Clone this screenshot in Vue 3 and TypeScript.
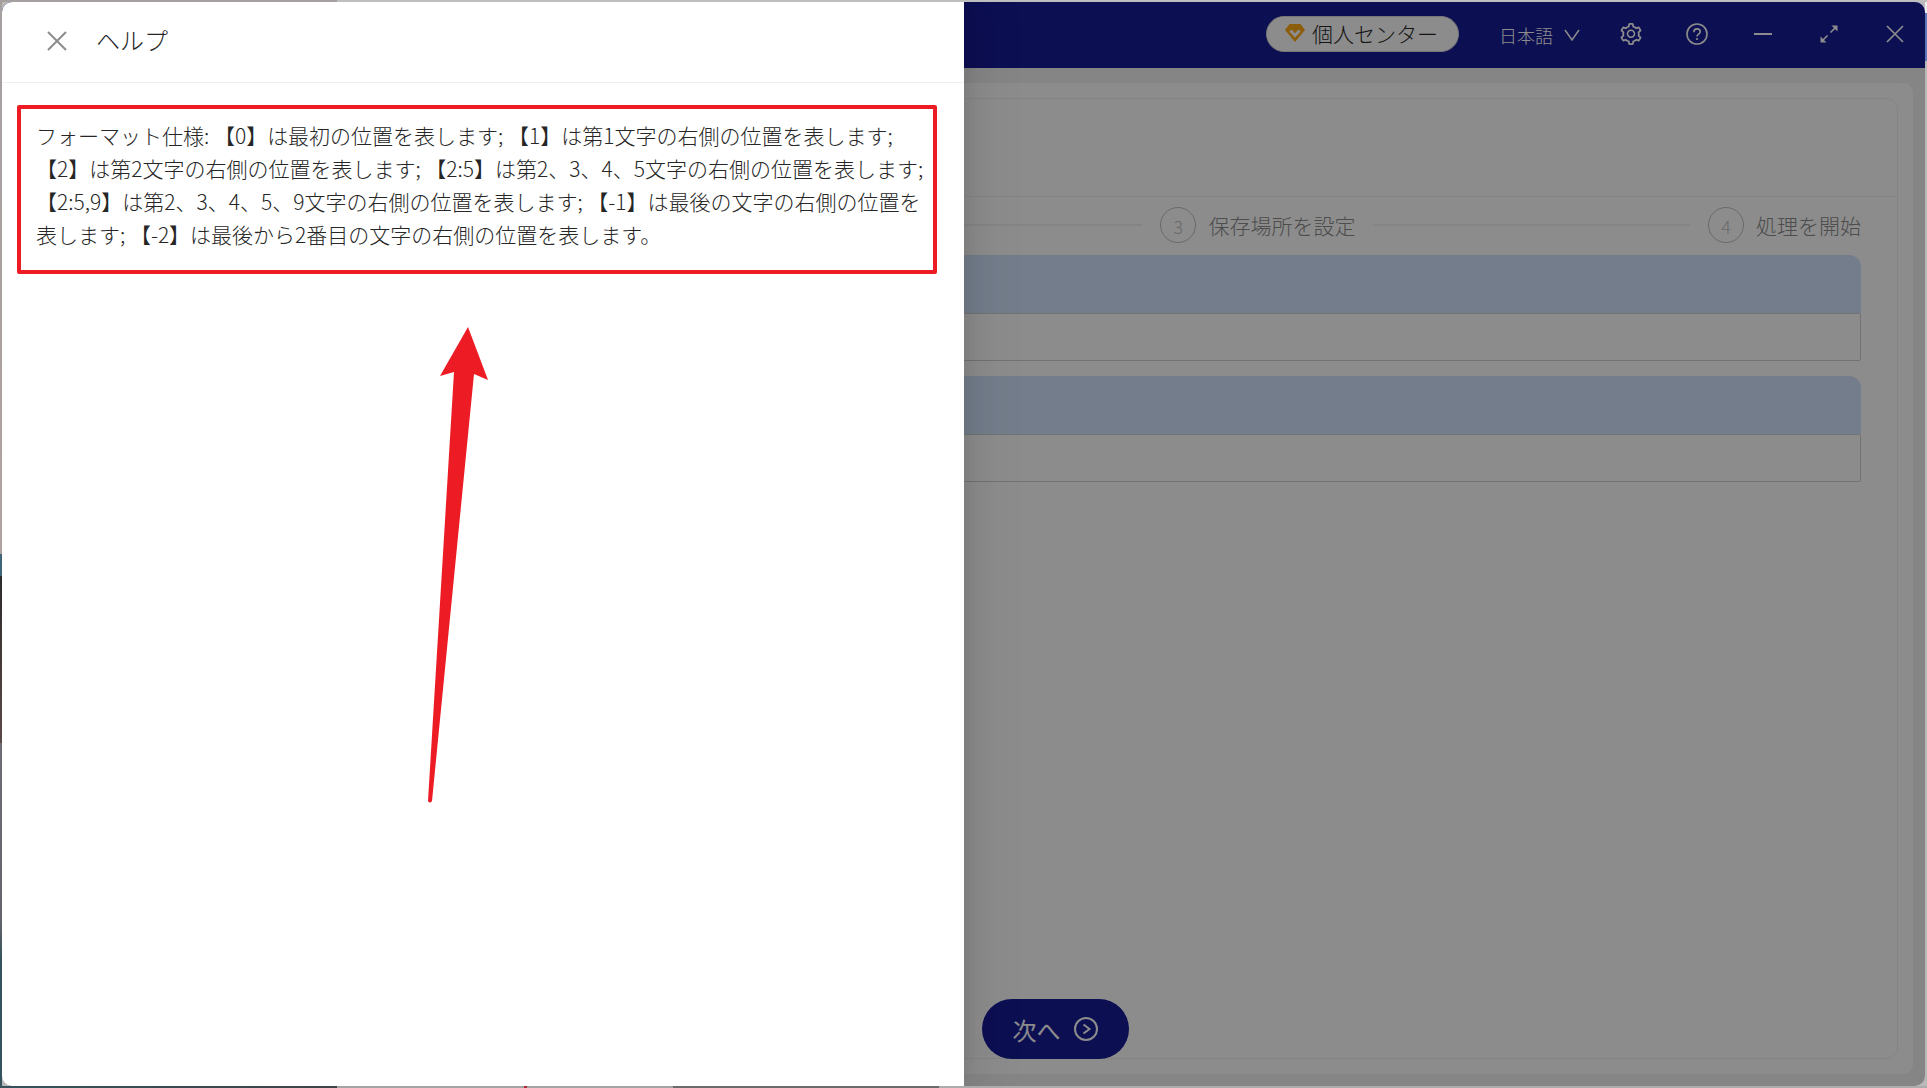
<script setup lang="ts">
interface Step {
  id: number
  title: string
}

const steps: Step[] = [
  { id: 3, title: '保存場所を設定' },
  { id: 4, title: '処理を開始' },
]

const panels: number[] = [1, 2]

const helpLines: string[] = [
  'フォーマット仕様: 【0】は最初の位置を表します; 【1】は第1文字の右側の位置を表します;',
  '【2】は第2文字の右側の位置を表します; 【2:5】は第2、3、4、5文字の右側の位置を表します;',
  '【2:5,9】は第2、3、4、5、9文字の右側の位置を表します; 【-1】は最後の文字の右側の位置を',
  '表します; 【-2】は最後から2番目の文字の右側の位置を表します。',
]
</script>

<template>
  <div class="desktop">
    <div class="window">
      <header class="titlebar">
        <button class="account" type="button">
          <svg width="20" height="20" viewBox="0 0 20 20" aria-hidden="true">
            <path d="M4.500 1h11L20 7 10 19 0 7z" fill="#ffa914" />
            <path d="M5.500 7.500L10 12.500l4.500-5" fill="none" stroke="#fff" stroke-width="3" />
          </svg>
          <span>個人センター</span>
        </button>
        <button class="language" type="button">
          <span>日本語</span>
          <svg width="16" height="16" viewBox="0 0 16 16" aria-hidden="true">
            <path d="M1 3l7 10 7-10" fill="none" stroke="#fff" stroke-width="1.500" />
          </svg>
        </button>
        <nav class="tools">
          <button type="button" aria-label="設定">
            <svg width="22" height="22" viewBox="64 64 896 896" fill="#fff" aria-hidden="true">
              <path d="M924.8 625.7l-65.5-56c3.1-19 4.7-38.4 4.7-57.8s-1.6-38.8-4.7-57.8l65.5-56a32.03 32.03 0 009.3-35.2l-.9-2.6a443.74 443.74 0 00-79.7-137.9l-1.8-2.1a32.12 32.12 0 00-35.1-9.5l-81.3 28.900c-30-24.600-63.500-44-99.700-57.600l-15.700-85a32.050 32.050 0 00-25.800-25.700l-2.700-.5c-52.100-9.400-106.900-9.400-159 0l-2.700.5a32.050 32.050 0 00-25.800 25.700l-15.800 85.400a351.860 351.860 0 00-99 57.400l-81.900-29.100a32 32 0 00-35.100 9.500l-1.800 2.100a446.020 446.020 0 00-79.700 137.900l-.9 2.600c-4.500 12.500-.8 26.500 9.300 35.200l66.300 56.600c-3.100 18.800-4.600 38-4.600 57.100 0 19.200 1.500 38.400 4.600 57.100L99 625.500a32.030 32.030 0 00-9.300 35.200l.9 2.600c18.100 50.400 44.900 96.900 79.700 137.900l1.800 2.100a32.120 32.120 0 0035.100 9.500l81.900-29.100c29.800 24.500 63.100 43.900 99 57.400l15.800 85.400a32.050 32.050 0 0025.800 25.700l2.700.5a449.400 449.400 0 00159 0l2.700-.5a32.050 32.050 0 0025.800-25.700l15.700-85a350 350 0 0099.700-57.600l81.300 28.900a32 32 0 0035.100-9.500l1.800-2.100c34.800-41.100 61.600-87.500 79.700-137.900l.9-2.600c4.500-12.300.8-26.300-9.300-35zM788.300 465.900c2.500 15.100 3.800 30.600 3.800 46.100s-1.300 31-3.800 46.100l-6.600 40.100 74.700 63.900a370.030 370.030 0 01-42.600 73.600L721 702.800l-31.400 25.800c-23.900 19.600-50.500 35-79.300 45.800l-38.100 14.300-17.900 97a377.500 377.500 0 01-85 0l-17.900-97.200-37.800-14.500c-28.500-10.800-55-26.200-78.700-45.700l-31.400-25.900-93.400 33.200c-17-22.900-31.200-47.600-42.600-73.600l75.500-64.500-6.500-40c-2.400-14.900-3.700-30.300-3.700-45.500 0-15.300 1.200-30.600 3.700-45.500l6.500-40-75.500-64.500c11.300-26.100 25.600-50.700 42.600-73.600l93.400 33.200 31.400-25.900c23.700-19.500 50.200-34.900 78.700-45.700l37.900-14.300 17.900-97.200c28.100-3.200 56.800-3.200 85 0l17.900 97 38.100 14.300c28.700 10.800 55.400 26.200 79.300 45.800l31.400 25.800 92.800-32.900c17 22.900 31.200 47.600 42.600 73.600L781.800 426l6.500 39.900zM512 326c-97.200 0-176 78.800-176 176s78.800 176 176 176 176-78.800 176-176-78.800-176-176-176zm79.200 255.200A111.600 111.600 0 01512 614c-29.900 0-58-11.700-79.200-32.800A111.600 111.600 0 01400 502c0-29.900 11.700-58 32.800-79.200C454 401.600 482.100 390 512 390c29.900 0 58 11.600 79.200 32.800A111.600 111.600 0 01624 502c0 29.900-11.700 58-32.800 79.200z" />
            </svg>
          </button>
          <button type="button" aria-label="ヘルプ">
            <svg width="22" height="22" viewBox="0 0 22 22" fill="none" stroke="#fff" stroke-width="1.600" aria-hidden="true">
              <circle cx="11" cy="11" r="10" />
              <path d="M7.800 9.200c0-2 1.400-3.300 3.200-3.300s3.200 1.200 3.200 2.900c0 2.200-3.200 2.300-3.200 4.700" />
              <path d="M11 15v2" />
            </svg>
          </button>
          <button type="button" aria-label="最小化">
            <svg width="22" height="22" viewBox="0 0 22 22" fill="none" stroke="#fff" stroke-width="2" aria-hidden="true">
              <path d="M2 11h18" />
            </svg>
          </button>
          <button type="button" aria-label="最大化">
            <svg width="22" height="22" viewBox="0 0 22 22" aria-hidden="true">
              <path d="M12.500 9.500l6-6M9.500 12.500l-6 6" fill="none" stroke="#fff" stroke-width="1.600" />
              <path d="M13.500 2.500h6v6zM8.500 19.500h-6v-6z" fill="#fff" />
            </svg>
          </button>
          <button type="button" aria-label="閉じる">
            <svg width="22" height="22" viewBox="0 0 22 22" fill="none" stroke="#fff" stroke-width="1.700" aria-hidden="true">
              <path d="M3 3l16 16M19 3L3 19" />
            </svg>
          </button>
        </nav>
      </header>

      <main class="content">
        <div class="card">
          <section class="panel">
            <div class="panel-head"></div>
            <div class="workspace">
              <ol class="steps">
                <li v-for="step in steps" :key="step.id" class="step">
                  <span class="rail" :class="{ lead: step.id === 3 }"></span>
                  <span class="badge">{{ step.id }}</span>
                  <span class="step-title">{{ step.title }}</span>
                </li>
              </ol>
              <div v-for="panel in panels" :key="panel" class="group">
                <div class="group-head"></div>
                <div class="group-body"></div>
              </div>
            </div>
            <footer class="actions">
              <button class="next" type="button">
                <span>次へ</span>
                <svg width="24" height="24" viewBox="0 0 24 24" fill="none" stroke="#fff" stroke-width="2" aria-hidden="true">
                  <circle cx="12" cy="12" r="11" />
                  <path d="M9.500 7.500l6 4.500-6 4.500" />
                </svg>
              </button>
            </footer>
          </section>
        </div>
      </main>

      <div class="mask">
        <aside class="drawer" role="dialog" aria-labelledby="drawer-title">
          <div class="drawer-head">
            <button class="close" type="button" aria-label="閉じる">
              <svg width="20" height="20" viewBox="0 0 20 20" fill="none" stroke="#8c8c8c" stroke-width="2" aria-hidden="true">
                <path d="M1 1l18 18M19 1L1 19" />
              </svg>
            </button>
            <h1 id="drawer-title">ヘルプ</h1>
          </div>
          <p class="note">
            <span v-for="line in helpLines" :key="line">{{ line }}</span>
          </p>
          <svg class="arrow" width="62" height="478" viewBox="0 0 62 478" aria-hidden="true">
            <path d="M41 0L61 53 47 47 5 474Q3 477 1 474L27 45 13 49z" fill="#ed1c24" />
          </svg>
        </aside>
      </div>
    </div>
  </div>
</template>

<style>
body {
  margin: 0;
}
</style>

<style scoped>
* {
  box-sizing: border-box;
}

.desktop {
  display: flex;
  min-height: 100vh;
  padding: 2px;
  font-family: 'Noto Sans CJK JP', sans-serif;
  font-weight: 300;
  background:
    linear-gradient(90deg, #a5a0a0 337px, #bebebe 337px) top / 100% 2px no-repeat,
    linear-gradient(90deg, #35535d, #3f4446 337px, #a3a3a3 337px, #a3a3a3 524px, #b0303a 524px, #b0303a 527px, #a3a3a3 527px, #a3a3a3 673px, #6b6b6b 673px, #6b6b6b 939px, #acacac 939px) bottom / 100% 2px no-repeat,
    linear-gradient(#a5a0a0, #b0a2a0 554px, #3f6478 554px, #3f6478 576px, #2c2b2a 576px, #5d4848 743px, #6d6d76 743px, #64646c 920px, #35535d 960px, #35535d) left / 2px 100% no-repeat,
    linear-gradient(#eeeeee 13px, #5b78bd 13px, #5b78bd 61px, #b9b9b9 61px) right / 2px 100% no-repeat,
    #b9b9b9;
}

.window {
  position: relative;
  display: flex;
  flex: 1;
  flex-direction: column;
  overflow: hidden;
  border-radius: 10px;
  background: #f3f3f3;
}

button {
  display: flex;
  align-items: center;
  padding: 0;
  border: 0;
  background: none;
  font: inherit;
  cursor: pointer;
}

svg {
  display: block;
  flex: none;
}

.titlebar {
  display: flex;
  align-items: center;
  justify-content: flex-end;
  gap: 40px;
  height: 66px;
  padding: 0 19px 2px 0;
  background: #181d97;
}

.account {
  gap: 7px;
  height: 36px;
  padding: 0 20px 2px 18px;
  border: 1px solid #d9d9d9;
  border-radius: 18px;
  background: #fff;
  color: #262626;
  font-size: 21px;
}

.language {
  gap: 11px;
  padding-top: 2px;
  color: #fff;
  font-size: 18px;
}

.tools {
  display: flex;
  gap: 44px;
}

.content {
  display: flex;
  flex: 1;
  padding: 15px 12px 12px;
}

.card {
  display: flex;
  flex: 1;
  padding: 15px;
  border-radius: 10px;
  background: #fff;
}

.panel {
  display: flex;
  flex: 1;
  flex-direction: column;
  border: 1px solid #f0f0f0;
  border-radius: 12px;
}

.panel-head {
  height: 98px;
  border-bottom: 1px solid #f0f0f0;
}

.workspace {
  flex: 1;
  padding: 10px 36px 0;
}

.steps {
  display: flex;
  margin: 0 0 12px;
  padding: 0;
  list-style: none;
}

.step {
  display: contents;
}

.rail {
  flex: 5;
  align-self: center;
  height: 2px;
  margin: 0 18px;
  background: #f0f0f0;
}

.rail.lead {
  flex: 17;
  margin-left: 0;
}

.badge {
  width: 36px;
  height: 36px;
  margin-right: 12px;
  border: 1px solid #bfbfbf;
  border-radius: 50%;
  color: #bfbfbf;
  font-size: 18px;
  line-height: 36px;
  text-align: center;
}

.step-title {
  color: #8c8c8c;
  font-size: 21px;
  line-height: 36px;
}

.group {
  margin-bottom: 15px;
}

.group-head {
  height: 58px;
  border-radius: 12px 12px 0 0;
  background: #d1e3fd;
}

.group-body {
  height: 48px;
  border: 1px solid #d0d0d0;
  border-radius: 2px;
}

.actions {
  display: grid;
  grid-template-columns: 1fr 1fr;
  margin-bottom: -1px;
}

.next {
  grid-column: 2;
  justify-self: start;
  gap: 13px;
  height: 60px;
  margin-left: 18px;
  padding: 0 31px;
  border-radius: 30px;
  background: #181d97;
  color: #fff;
  font-size: 24px;
  font-weight: 400;
}

.mask {
  position: absolute;
  inset: 0;
  display: flex;
  background: rgba(0, 0, 0, 0.45);
}

.drawer {
  width: 50%;
  background: #fff;
  box-shadow:
    6px 0 16px -8px rgba(0, 0, 0, 0.08),
    9px 0 28px 0 rgba(0, 0, 0, 0.05),
    12px 0 48px 16px rgba(0, 0, 0, 0.03);
}

.drawer-head {
  display: flex;
  align-items: center;
  gap: 29px;
  height: 81px;
  padding: 0 45px 2px;
  border-bottom: 1px solid #f0f0f0;
}

.drawer-head h1 {
  margin: 0;
  padding-bottom: 2px;
  color: #262626;
  font-size: 24px;
  font-weight: 300;
  line-height: 36px;
}

.note {
  margin: 22px 27px 0 15px;
  padding: 10px 0 19px 15px;
  border: 4px solid #ed1c24;
  border-radius: 2px;
  color: #262626;
  font-size: 21px;
  line-height: 33px;
  white-space: nowrap;
}

.note span {
  display: block;
}

.arrow {
  margin: 53px 0 0 425px;
}
</style>
